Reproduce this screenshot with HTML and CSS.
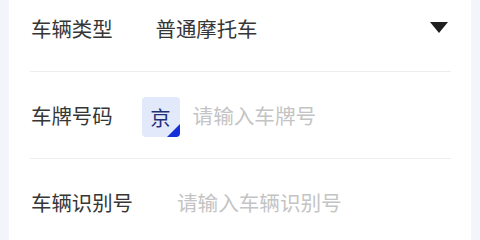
FILE: index.html
```html
<!DOCTYPE html>
<html lang="zh-CN">
<head>
<meta charset="utf-8">
<link rel="stylesheet" href="styles.css">
</head>
<body>
<div class="page">
  <div class="card">
    <div class="row">
      <span class="label">车辆类型</span>
      <span class="value gap-type">普通摩托车</span>
      <svg class="caret" width="18" height="11" viewBox="0 0 18 11"><polygon points="0,0 18,0 9,11" fill="#1f1f1f"/></svg>
    </div>
    <div class="row">
      <span class="label">车牌号码</span>
      <span class="plate-prefix">京<span class="corner"></span></span>
      <span class="placeholder gap-plate">请输入车牌号</span>
    </div>
    <div class="row">
      <span class="label">车辆识别号</span>
      <span class="placeholder gap-vin">请输入车辆识别号</span>
    </div>
  </div>
</div>
</body>
</html>
```
FILE: styles.css
```css
html, body {
  margin: 0;
  padding: 0;
  background: #f4f4fb;
  font-family: "Noto Sans CJK SC", "Noto Sans", sans-serif;
}
.page {
  padding: 0 9px;
}
.card {
  background: #ffffff;
  margin-top: -15px;
  padding: 0 20px 0 21px;
}
.row {
  display: flex;
  align-items: center;
  height: 86px;
  border-bottom: 1px solid #ededed;
}
.label {
  font-size: 20.4px;
  color: #363636;
  margin-left: 1px;
  white-space: nowrap;
}
.value {
  font-size: 20.4px;
  color: #363636;
  flex: 1;
}
.gap-type { margin-left: 43px; }
.gap-plate { margin-left: 13px; }
.gap-vin { margin-left: 44px; }
.caret {
  margin-right: 3px;
  margin-top: -2px;
}
.placeholder {
  font-size: 20.6px;
  color: #c4c4c4;
}
.plate-prefix {
  position: relative;
  margin-left: 29px;
  width: 38px;
  height: 40px;
  border-radius: 4px;
  background: #e2e9fb;
  color: #1f2f7a;
  font-size: 20.4px;
  display: flex;
  align-items: center;
  justify-content: center;
  overflow: hidden;
  margin-top: 4px;
}
.corner {
  position: absolute;
  right: 0;
  bottom: 0;
  width: 0;
  height: 0;
  border-style: solid;
  border-width: 0 0 13px 13px;
  border-color: transparent transparent #1430d8 transparent;
}
```
